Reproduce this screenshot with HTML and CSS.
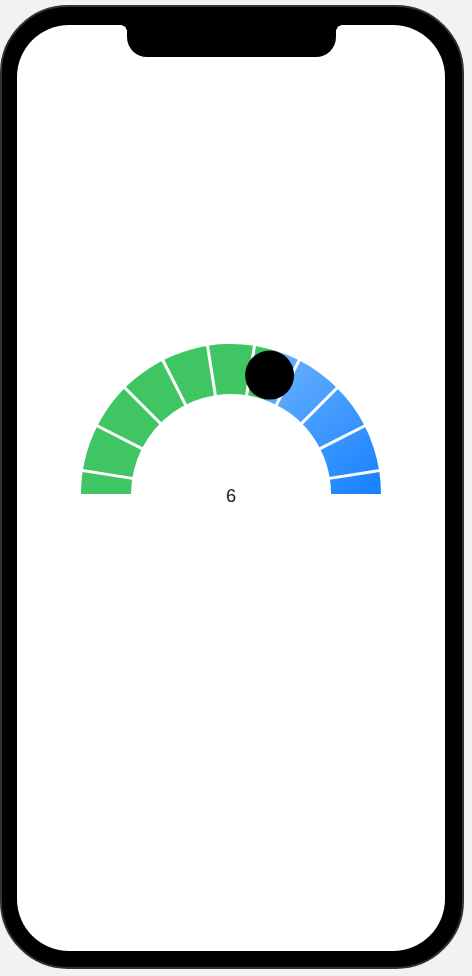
FILE: index.html
```html
<!DOCTYPE html>
<html lang="en">

<head>
  <meta charset="UTF-8" />
  <meta name="viewport" content="width=device-width, initial-scale=1.0" />
  <title>Gauge</title>
  <link rel="stylesheet" href="styles.css">
</head>

<body>
  <div class="phone">
    <div class="screen">
      <div class="notch"></div>

      <!-- Gauge -->
      <div class="gauge">
        <svg width="300" height="165" viewBox="0 0 300 165">
          <defs>
            <linearGradient id="blueFill" gradientUnits="userSpaceOnUse" x1="175" y1="0" x2="300" y2="150">
              <stop offset="0" stop-color="#74b7ff" />
              <stop offset="1" stop-color="#1580ff" />
            </linearGradient>
          </defs>

          <path class="arc-green" d="M0 150 A150 150 0 0 1 196.35 7.34 L180.9 54.9 A100 100 0 0 0 50 150 Z" />
          <path class="arc-blue" d="M196.35 7.34 A150 150 0 0 1 300 150 L250 150 A100 100 0 0 0 180.9 54.9 Z" />

          <g class="gaps">
            <line x1="-8" y1="150" x2="55" y2="150" transform="rotate(9 150 150)" />
            <line x1="-8" y1="150" x2="55" y2="150" transform="rotate(27 150 150)" />
            <line x1="-8" y1="150" x2="55" y2="150" transform="rotate(45 150 150)" />
            <line x1="-8" y1="150" x2="55" y2="150" transform="rotate(63 150 150)" />
            <line x1="-8" y1="150" x2="55" y2="150" transform="rotate(81 150 150)" />
            <line x1="-8" y1="150" x2="55" y2="150" transform="rotate(99 150 150)" />
            <line x1="-8" y1="150" x2="55" y2="150" transform="rotate(117 150 150)" />
            <line x1="-8" y1="150" x2="55" y2="150" transform="rotate(135 150 150)" />
            <line x1="-8" y1="150" x2="55" y2="150" transform="rotate(153 150 150)" />
            <line x1="-8" y1="150" x2="55" y2="150" transform="rotate(171 150 150)" />
          </g>

          <circle class="knob" cx="188.6" cy="31.1" r="24.5" />
          <text class="gauge-value" x="150" y="157.5">6</text>
        </svg>
      </div>
    </div>
  </div>
</body>

</html>
```

FILE: styles.css
```css
body {
  margin: 0;
  background-color: #f2f2f2;
  font-family: "Liberation Sans", Arial, sans-serif;
}

.phone {
  box-sizing: border-box;
  width: 464px;
  height: 964px;
  margin-top: 5px;
  padding: 18px 17px 16px 15px;
  background-color: #000;
  border: 2px solid #333;
  border-radius: 68px;
}

.screen {
  height: 100%;
  background-color: #ffffff;
  border-radius: 52px;
  display: flex;
  flex-direction: column;
  align-items: center;
}

.notch {
  position: relative;
  width: 209px;
  height: 32px;
  background-color: #000;
  border-radius: 0 0 20px 20px;
}

.notch::before,
.notch::after {
  content: "";
  position: absolute;
  top: 0;
  width: 6px;
  height: 6px;
}

.notch::before {
  left: -6px;
  background: radial-gradient(circle at 0 100%, transparent 5.5px, #000 6px);
}

.notch::after {
  right: -6px;
  background: radial-gradient(circle at 100% 100%, transparent 5.5px, #000 6px);
}

.gauge {
  margin-top: 287px;
}

.gauge svg {
  display: block;
}

.arc-green {
  fill: #40c563;
}

.arc-blue {
  fill: url(#blueFill);
}

.gaps line {
  stroke: #ffffff;
  stroke-width: 3;
}

.knob {
  fill: #000;
}

.gauge-value {
  font-family: "Liberation Sans", Arial, sans-serif;
  font-size: 18px;
  fill: #222;
  text-anchor: middle;
}
```
